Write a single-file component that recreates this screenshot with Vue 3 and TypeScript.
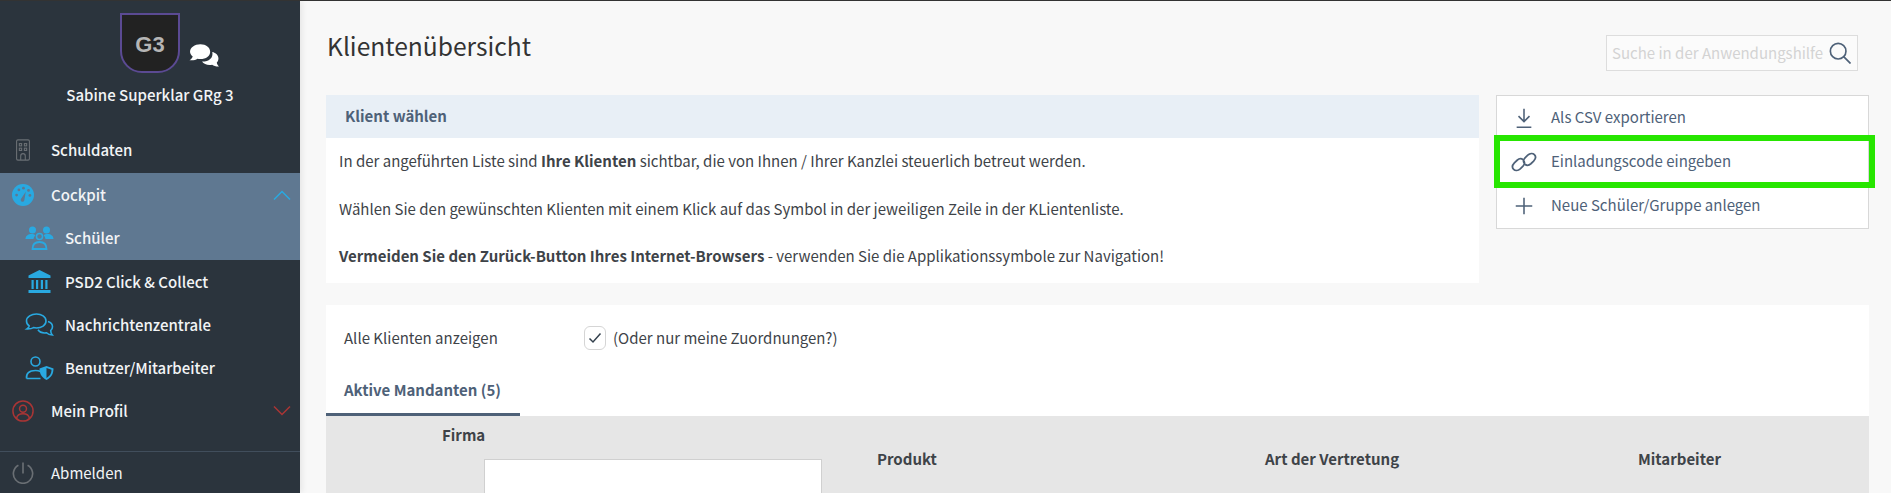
<template>
  <div class="page">
    <aside class="sidebar">
      <div class="profile">
        <div class="badge-row">
          <div class="shield">G3</div>
          <svg class="chat-bubbles" viewBox="0 0 30 24" fill="#fff">
            <path d="M11 1c5.500 0 9.500 3.200 9.500 7.300S16.500 15.500 11 15.500c-1 0-2-.1-2.900-.4C6.500 16.300 4 17 .5 16.600c1.600-.9 2.700-2.200 3.100-3.600C2 11.700 1 10.100 1 8.300 1 4.200 5.500 1 11 1z" />
            <path d="M22.500 8.500c3.500.7 6 3.300 6 6.300 0 1.500-.6 2.800-1.600 3.900.1 1.400.8 2.700 2.100 3.900-2.800.1-5-.5-6.600-1.700-.8.200-1.600.3-2.400.3-3.200 0-6-1.300-7.400-3.300 6.200.2 11.300-3.500 9.900-9.400z" />
          </svg>
        </div>
        <div class="profile-name">Sabine Superklar GRg 3</div>
      </div>

      <nav class="nav">
        <div class="nav-item first">
          <svg class="nav-icon" viewBox="0 0 24 24" fill="none" stroke="#6a6f74" stroke-width="1.2">
            <rect x="5" y="1" width="14" height="22" rx="1.500" />
            <rect x="8" y="5" width="2.500" height="2.500" />
            <rect x="13.500" y="5" width="2.500" height="2.500" />
            <rect x="8" y="10" width="2.500" height="2.500" />
            <rect x="13.500" y="10" width="2.500" height="2.500" />
            <path d="M9.500 23v-4.500a2.500 2.500 0 0 1 5 0V23" />
          </svg>
          <span>Schuldaten</span>
        </div>

        <div class="nav-group">
          <div class="nav-item">
            <svg class="nav-icon" viewBox="0 0 24 24">
              <circle cx="12" cy="12" r="12" fill="#29a9e1" />
              <g fill="#5f7891">
                <circle cx="5" cy="12" r="1.500" />
                <circle cx="7.500" cy="6.500" r="1.500" />
                <circle cx="12.500" cy="4.500" r="1.500" />
                <circle cx="18" cy="7" r="1.500" />
                <circle cx="19.500" cy="12.500" r="1.500" />
                <path d="M15 8.500l-1.500 9a2 2 0 1 1-3.600-1.300z" />
              </g>
            </svg>
            <span>Cockpit</span>
            <svg class="chevron" viewBox="0 0 18 10" fill="none" stroke="#29a9e1" stroke-width="1.500">
              <path d="M1 9.500L9 1.500l8 8" />
            </svg>
          </div>
          <div class="sub-item">
            <svg class="sub-icon" viewBox="0 0 28 24" fill="#29a9e1">
              <circle cx="7" cy="4" r="3.500" />
              <circle cx="21" cy="4" r="3.500" />
              <path d="M0 13c0-3 2.500-5 6-5 1.500 0 3 .5 4 1.300-1.200 1-1.800 2.300-2 3.700z" />
              <path d="M28 13c0-3-2.500-5-6-5-1.500 0-3 .5-4 1.300 1.200 1 1.800 2.300 2 3.700z" />
              <circle cx="14" cy="10.500" r="3" fill="none" stroke="#29a9e1" stroke-width="1.500" />
              <path d="M7 23c0-4 2-7 7-7s7 3 7 7z" fill="none" stroke="#29a9e1" stroke-width="1.800" />
            </svg>
            <span>Schüler</span>
          </div>
        </div>

        <div class="sub-item tight">
          <svg class="sub-icon" viewBox="0 0 28 24" fill="#29a9e1">
            <path d="M14 0l11 5.500V8H3V5.500z" />
            <rect x="6" y="10" width="2.200" height="9" />
            <rect x="10.500" y="10" width="2.200" height="9" />
            <rect x="15.300" y="10" width="2.200" height="9" />
            <rect x="19.800" y="10" width="2.200" height="9" />
            <rect x="3" y="20" width="22" height="3" />
          </svg>
          <span>PSD2 Click &amp; Collect</span>
        </div>
        <div class="sub-item tight">
          <svg class="sub-icon" viewBox="0 0 28 24" fill="none" stroke="#29a9e1" stroke-width="1.600">
            <path d="M11 1c5 0 9.500 2.800 9.500 7S16 15 11 15c-1 0-2-.1-3-.4-1.500 1-3.500 1.400-6.500 1.300 1.400-.9 2-1.800 2.200-3C2 11.800 1 10 1 8c0-4.200 5-7 10-7z" />
            <path d="M22.500 8.500c2.700.9 4.500 2.800 4.500 5.200 0 1.500-.7 2.800-1.800 3.800 0 1.800.5 3.200 1.600 4.500-2.500-.1-4.500-.9-5.800-2.200-3.500.5-7-.7-8.500-3" />
          </svg>
          <span>Nachrichtenzentrale</span>
        </div>
        <div class="sub-item tight">
          <svg class="sub-icon" viewBox="0 0 28 24">
            <circle cx="10" cy="5.500" r="4.500" fill="none" stroke="#29a9e1" stroke-width="1.600" />
            <path d="M1 22.500c-.5-5 2.500-8 9-8 2 0 3.500.3 5 1M1 22.500h14" fill="none" stroke="#29a9e1" stroke-width="1.600" />
            <path d="M21 10l7 2.500c0 5-2 9-7 11.500-5-2.500-7-6.500-7-11.500z" fill="#29a9e1" />
            <path d="M21 12v10c3.500-2 5-5 5-8.300z" fill="#2b343d" />
          </svg>
          <span>Benutzer/Mitarbeiter</span>
        </div>

        <div class="nav-item">
          <svg class="nav-icon" viewBox="0 0 24 24" fill="none" stroke="#a93535" stroke-width="1.600">
            <circle cx="12" cy="12" r="11" />
            <circle cx="12" cy="9.500" r="3.800" />
            <path d="M5 20c.5-3.500 3-5 7-5s6.500 1.500 7 5" />
          </svg>
          <span>Mein Profil</span>
          <svg class="chevron" viewBox="0 0 18 10" fill="none" stroke="#a93535" stroke-width="1.500">
            <path d="M1 .5l8 8 8-8" />
          </svg>
        </div>
      </nav>

      <div class="logout">
        <svg class="nav-icon" viewBox="0 0 24 24" fill="none" stroke="#6a6f74" stroke-width="1.800">
          <path d="M7 3.500a10.500 10.500 0 1 0 10 0" />
          <path d="M12 .5v12" />
        </svg>
        <span>Abmelden</span>
      </div>
    </aside>

    <main class="content">
      <div class="title-row">
        <h1>Klientenübersicht</h1>
        <div class="help-search">
          <span>Suche in der Anwendungshilfe</span>
          <svg viewBox="0 0 24 24" fill="none" stroke="#4e6178" stroke-width="1.800">
            <circle cx="10" cy="10" r="8.500" />
            <path d="M16 16l7.500 7.500" />
          </svg>
        </div>
      </div>

      <div class="top-row">
        <section class="info">
          <div class="info-head">Klient wählen</div>
          <div class="info-body">
            <p>In der angeführten Liste sind <b>Ihre Klienten</b> sichtbar, die von Ihnen / Ihrer Kanzlei steuerlich betreut werden.</p>
            <p>Wählen Sie den gewünschten Klienten mit einem Klick auf das Symbol in der jeweiligen Zeile in der KLientenliste.</p>
            <p><b>Vermeiden Sie den Zurück-Button Ihres Internet-Browsers</b> - verwenden Sie die Applikationssymbole zur Navigation!</p>
          </div>
        </section>

        <section class="actions">
          <div class="action">
            <svg viewBox="0 0 24 24" fill="none" stroke="#4e6178" stroke-width="1.700">
              <path d="M12 2v13M6 10l6 6 6-6M4 22h16" />
            </svg>
            <span>Als CSV exportieren</span>
          </div>
          <div class="action">
            <svg viewBox="0 0 28 24" fill="none" stroke="#4e6178" stroke-width="1.900">
              <path d="M13 9.500c-1.800-1.400-4.500-1.200-6.500.6L3.500 13c-2.300 2.400-2.500 5.300-.8 7s4.800 1.600 7.200-.6l3-3c1.800-1.900 2-4.100.9-5.600" />
              <path d="M15 14.500c1.800 1.400 4.500 1.200 6.500-.6l3-2.900c2.300-2.400 2.500-5.300.8-7s-4.800-1.600-7.200.6l-3 3c-1.800 1.900-2 4.100-.9 5.600" />
            </svg>
            <span>Einladungscode eingeben</span>
          </div>
          <div class="action">
            <svg viewBox="0 0 24 24" fill="none" stroke="#4e6178" stroke-width="1.700">
              <path d="M12 3v18M3 12h18" />
            </svg>
            <span>Neue Schüler/Gruppe anlegen</span>
          </div>
          <div class="highlight"></div>
        </section>
      </div>

      <section class="clients">
        <div class="filter-row">
          <span class="filter-label">Alle Klienten anzeigen</span>
          <span class="checkbox">
            <svg viewBox="0 0 16 16" fill="none" stroke="#33404d" stroke-width="1.500">
              <path d="M2.500 8.500l3.500 3.500L13.500 3.500" />
            </svg>
          </span>
          <span class="filter-hint">(Oder nur meine Zuordnungen?)</span>
        </div>
        <div class="tabs">
          <div class="tab">Aktive Mandanten (5)</div>
        </div>
        <div class="table-head">
          <div class="col-firma">
            <div class="firma-label">Firma</div>
            <div class="firma-input"></div>
          </div>
          <div v-for="col in columns" :key="col" class="col-title">{{ col }}</div>
        </div>
      </section>
    </main>
  </div>
</template>

<script setup lang="ts">
const columns: string[] = ["Produkt", "Art der Vertretung", "Mitarbeiter"];
</script>

<style>
html,
body {
  margin: 0;
  overflow: hidden;
}
</style>

<style scoped>
.page {
  display: flex;
  width: 1891px;
  height: 493px;
  overflow: hidden;
  box-sizing: border-box;
  border-top: 1px solid #333;
  background: #f8f8f8;
  font-family: "Noto Sans CJK JP", "Noto Sans", sans-serif;
  font-size: 15px;
  line-height: 24px;
  color: #3e4348;
}

.sidebar {
  flex: none;
  display: flex;
  flex-direction: column;
  width: 300px;
  height: 492px;
  background: #2b343d;
  color: #f2f4f6;
  box-shadow: 2px 0 6px rgba(0, 0, 0, 0.08);
}

.profile {
  height: 127px;
  padding-top: 12px;
  box-sizing: border-box;
}

.badge-row {
  display: flex;
  align-items: flex-end;
  padding-left: 120px;
}

.shield {
  display: flex;
  align-items: flex-start;
  justify-content: center;
  box-sizing: border-box;
  width: 60px;
  height: 60px;
  padding-top: 18px;
  border: 2px solid #5b4a93;
  border-radius: 0 0 22px 22px;
  background: #222;
  color: #b5b5b5;
  font-family: "Liberation Sans", sans-serif;
  font-size: 22px;
  font-weight: 700;
}

.chat-bubbles {
  width: 31px;
  height: 25px;
  margin: 0 0 5px 9px;
}

.profile-name {
  margin-top: 10px;
  text-align: center;
  font-weight: 500;
}

.nav {
  flex: 1;
  font-weight: 500;
}

.nav-group {
  background: #5f7891;
}

.nav-item,
.sub-item,
.logout {
  display: flex;
  align-items: center;
  height: 43.500px;
  box-sizing: border-box;
}

.nav-item.first {
  height: 45px;
  padding-bottom: 1.500px;
}

.sub-item.tight {
  height: 43px;
}

.nav-item {
  padding-left: 12px;
}

.nav-item span,
.logout span {
  margin-left: 17px;
}

.sub-item {
  padding-left: 24px;
}

.sub-item span {
  margin-left: 10px;
}

.nav-icon {
  flex: none;
  width: 22px;
  height: 22px;
}

.sub-icon {
  flex: none;
  width: 31px;
  height: 24px;
}

.chevron {
  width: 18px;
  height: 10px;
  margin-left: auto;
  margin-right: 9px;
}

.logout {
  height: 42px;
  padding-left: 12px;
  border-top: 1px solid #414e5c;
}

.content {
  flex: 1;
  min-width: 0;
  padding: 0 22px 0 26px;
}

.title-row {
  display: flex;
  justify-content: space-between;
  height: 94px;
  padding-right: 11px;
}

h1 {
  margin: 26px 0 0 1px;
  font-size: 24.600px;
  line-height: 36px;
  font-weight: 400;
  color: #333;
}

.help-search {
  display: flex;
  align-items: center;
  justify-content: space-between;
  box-sizing: border-box;
  width: 252px;
  height: 36px;
  margin-top: 34px;
  padding: 0 6px 0 5px;
  border: 1px solid #ddd;
  background: #fbfbfb;
  color: #d3d3d3;
  white-space: nowrap;
}

.help-search svg {
  flex: none;
  width: 22px;
  height: 22px;
}

.top-row {
  display: flex;
  align-items: flex-start;
  gap: 17px;
}

.info {
  flex: none;
  width: 1153px;
  background: #fff;
}

.info-head {
  height: 43px;
  padding-left: 19px;
  background: #e8eff6;
  color: #4e6178;
  font-weight: 700;
  line-height: 41px;
}

.info-body {
  height: 145px;
  padding: 11px 13px 0;
  box-sizing: border-box;
}

.info-body p {
  margin: 0 0 23.700px;
}

.actions {
  position: relative;
  flex: 1;
  box-sizing: border-box;
  height: 134px;
  border: 1px solid #d8d8d8;
  background: #fff;
}

.action {
  display: flex;
  align-items: center;
  height: 44px;
  padding-left: 14px;
  color: #4e6178;
}

.action span {
  margin-bottom: 2px;
}

.action svg {
  flex: none;
  width: 26px;
  height: 22px;
  margin-right: 14px;
}

.highlight {
  position: absolute;
  left: -3px;
  top: 39px;
  width: 381px;
  height: 53px;
  box-sizing: border-box;
  border: 6px solid #27e600;
}

.clients {
  margin-top: 22px;
  background: #fff;
}

.filter-row {
  display: flex;
  align-items: center;
  height: 66px;
  padding-left: 18px;
}

.filter-label {
  width: 240px;
}

.checkbox {
  display: flex;
  align-items: center;
  justify-content: center;
  box-sizing: border-box;
  width: 22px;
  height: 24px;
  margin-right: 7px;
  border: 1px solid #d5d5d5;
  border-radius: 6px;
}

.checkbox svg {
  width: 16px;
  height: 16px;
}

.tabs {
  height: 45px;
}

.tab {
  box-sizing: border-box;
  width: 194px;
  height: 45px;
  padding-left: 18px;
  border-bottom: 3px solid #4e6178;
  color: #4e6178;
  font-weight: 700;
  line-height: 38px;
}

.table-head {
  display: grid;
  grid-template-columns: 551px 388px 373px 1fr;
  height: 90px;
  background: #e6e6e6;
  font-weight: 700;
}

.col-firma {
  padding-left: 116px;
}

.firma-label {
  margin-top: 7px;
}

.firma-input {
  box-sizing: border-box;
  width: 338px;
  height: 60px;
  margin: 12px 0 0 42px;
  border: 1px solid #d0d0d0;
  background: #fff;
}

.col-title {
  padding-top: 31px;
}
</style>
